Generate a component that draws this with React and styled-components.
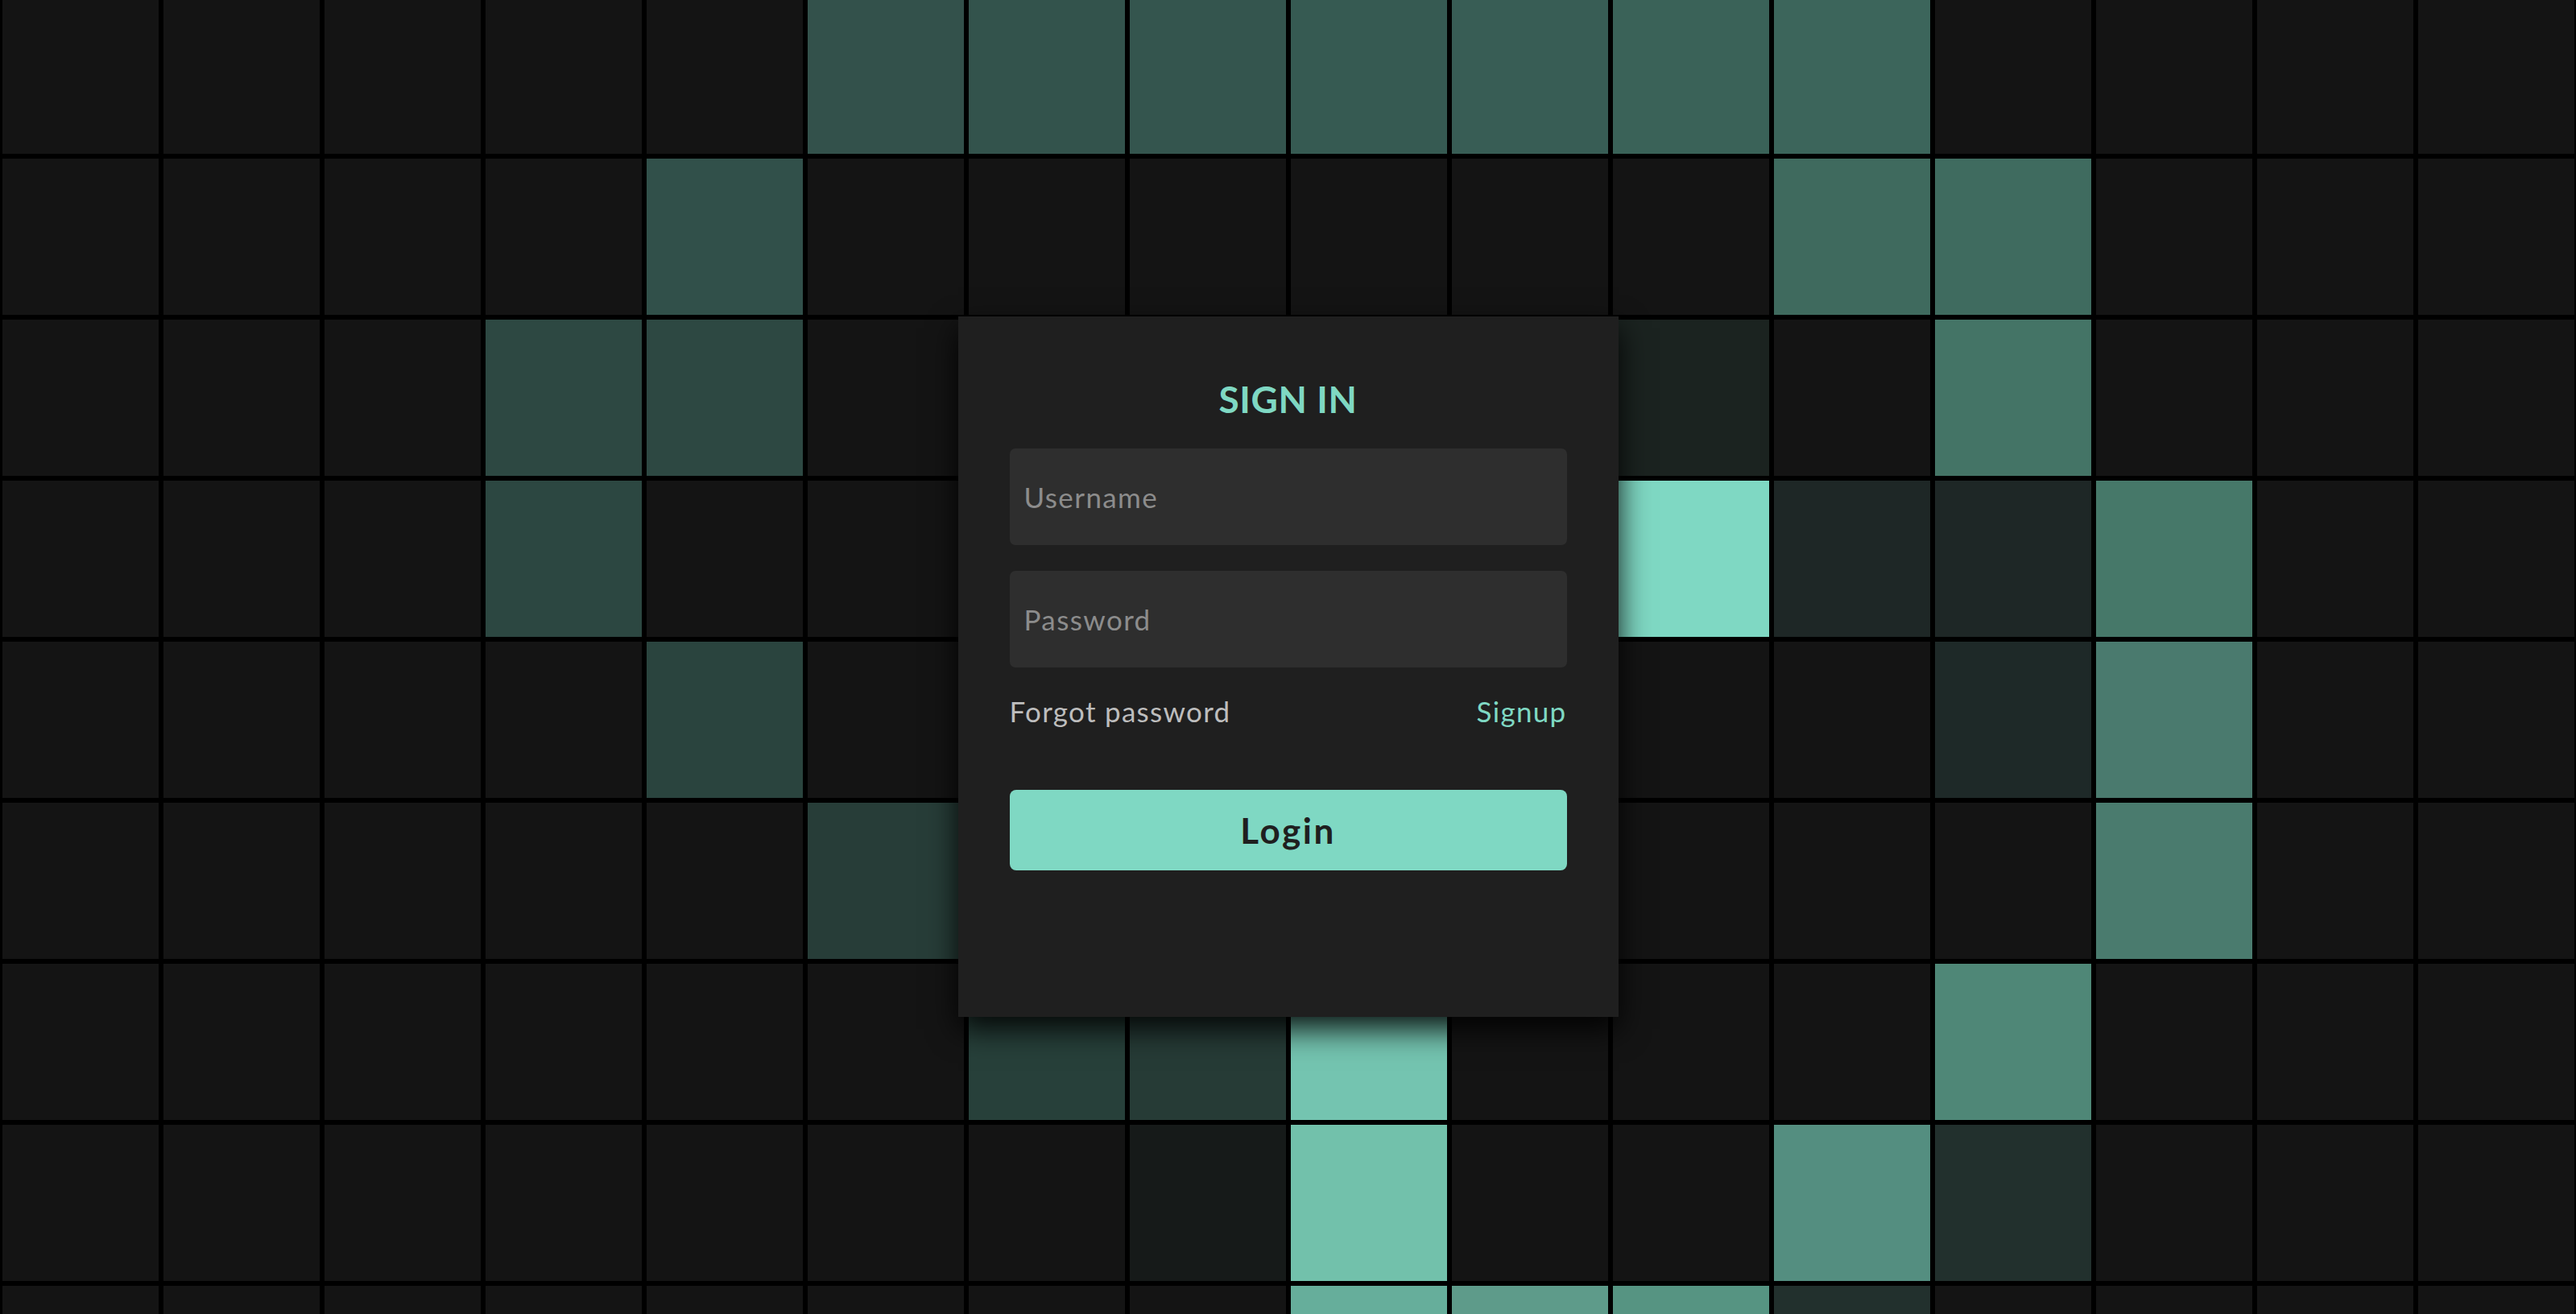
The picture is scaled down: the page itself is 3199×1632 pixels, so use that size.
import React from "react";
import styled, { createGlobalStyle } from "styled-components";

const D = "#141414";

const cells = [
  [D, D, D, D, D, "#33514b", "#33534c", "#34554e", "#365a52", "#385d55", "#3a6258", "#3c655b", D, D, D, D],
  [D, D, D, D, "#31504a", D, D, D, D, D, D, "#3f6a5e", "#3f6b5f", D, D, D],
  [D, D, D, "#2d4842", "#2d4842", D, D, D, D, D, "#1b2320", D, "#447466", D, D, D],
  [D, D, D, "#2c4741", D, D, D, D, D, D, "#7fd8c3", "#1e2726", "#1e2726", "#467869", D, D],
  [D, D, D, D, "#2a443e", D, D, D, D, D, D, D, "#1e2928", "#4a7a6e", D, D],
  [D, D, D, D, D, "#273d38", D, D, D, D, D, D, D, "#4a7b6e", D, D],
  [D, D, D, D, D, D, "#27403a", "#263b36", "#74c4b0", D, D, D, "#4f8777", D, D, D],
  [D, D, D, D, D, D, D, "#161a19", "#72c1ab", D, D, "#548e80", "#22302d", D, D, D],
  [D, D, D, D, D, D, D, D, "#66ae9b", "#5e9b8a", "#569482", "#22302d", D, D, D, D],
];

const App = () => {
  return (
    <>
      <GlobalStyle />
      <Page>
        <Grid>
          {cells.map((row, r) =>
            row.map((color, c) => <Cell key={`${r}-${c}`} $color={color} />)
          )}
        </Grid>
        <Overlay>
          <Card>
            <Title>SIGN IN</Title>
            <Form onSubmit={(e) => e.preventDefault()}>
              <Fields>
                <Input type="text" placeholder="Username" />
                <Input type="password" placeholder="Password" />
                <Links>
                  <LinkText href="#">Forgot password</LinkText>
                  <LinkText href="#" $accent>
                    Signup
                  </LinkText>
                </Links>
              </Fields>
              <LoginButton type="submit">Login</LoginButton>
            </Form>
          </Card>
        </Overlay>
      </Page>
    </>
  );
};

export default App;

const GlobalStyle = createGlobalStyle`
  * {
    box-sizing: border-box;
  }
  body {
    margin: 0;
    background: #000;
    font-family: "Lato", "Noto Sans", sans-serif;
  }
`;

const Page = styled.div`
  position: relative;
  width: 100vw;
  height: 100vh;
  overflow: hidden;
  background: #000;
`;

const Grid = styled.div`
  display: grid;
  grid-template-columns: repeat(16, 194px);
  grid-auto-rows: 194px;
  gap: 6px;
  padding-left: 3px;
  margin-top: -3px;
`;

const Cell = styled.span`
  display: block;
  background: ${(p) => p.$color};
`;

const Overlay = styled.div`
  position: absolute;
  inset: 0;
  padding-top: 24px;
  display: flex;
  justify-content: center;
  align-items: center;
`;

const Card = styled.div`
  width: 820px;
  height: 870px;
  padding: 75px 64px 0;
  background: #1f1f1f;
  box-shadow: 0 15px 35px rgba(0, 0, 0, 0.9);
  display: flex;
  flex-direction: column;
  align-items: stretch;
`;

const Title = styled.h2`
  margin: 0 0 34px;
  text-align: center;
  font-size: 46px;
  font-weight: 700;
  line-height: 1.2;
  letter-spacing: 0.6px;
  color: #7fd8c3;
`;

const Form = styled.form`
  display: flex;
  flex-direction: column;
  gap: 77px;
`;

const Fields = styled.div`
  display: flex;
  flex-direction: column;
  gap: 32px;
`;

const Input = styled.input`
  height: 120px;
  width: 100%;
  padding: 0 18px;
  border: none;
  outline: none;
  border-radius: 7px;
  background: #2e2e2e;
  color: #e0e0e0;
  font-family: "Lato", "Noto Sans", sans-serif;
  font-size: 35px;
  letter-spacing: 1.4px;
  &::placeholder {
    color: #8c8c8c;
  }
`;

const Links = styled.div`
  display: flex;
  justify-content: space-between;
  align-items: center;
  margin-top: 1px;
`;

const LinkText = styled.a`
  font-size: 35px;
  line-height: 1.2;
  letter-spacing: 1.3px;
  text-decoration: none;
  color: ${(p) => (p.$accent ? "#7fd8c3" : "#bdbdbd")};
`;

const LoginButton = styled.button`
  height: 100px;
  width: 100%;
  border: none;
  border-radius: 8px;
  background: #7fd8c3;
  color: #1f1f1f;
  font-family: "Lato", "Noto Sans", sans-serif;
  font-size: 44px;
  font-weight: 700;
  letter-spacing: 2.5px;
  cursor: pointer;
`;
